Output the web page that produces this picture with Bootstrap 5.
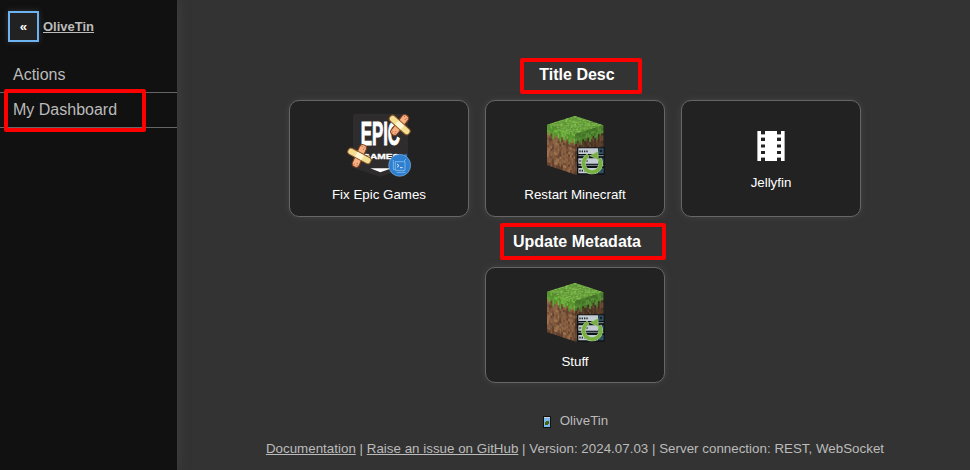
<!DOCTYPE html>
<html lang="en">
<head>
<meta charset="utf-8">
<meta name="viewport" content="width=device-width, initial-scale=1">
<title>OliveTin</title>
<link href="https://cdn.jsdelivr.net/npm/bootstrap@5.3.0/dist/css/bootstrap.min.css" rel="stylesheet">
<style>
body{background:#333;color:#bbb;font-family:"Liberation Sans",Arial,sans-serif;height:470px;overflow:hidden}
.side{width:177px;background:#111;box-shadow:0 0 10px 0 #444;font-size:16px}
.side-head{height:58px;padding:11px 8px 0}
.toggle{width:31px;height:31px;background:#222;border:1px solid #666;outline:2px solid #6db3f2;outline-offset:-2px;color:#fff;font-weight:700;font-size:13.33px;border-radius:0;box-shadow:0 0 6px #333}
.toggle:hover{background:#222;color:#fff}
.brand{font-size:13px;font-weight:700;color:#bbb;margin-left:4px;padding-top:6px}
.side-link{height:35px;padding:0 13px;line-height:34px;color:#bbb;text-decoration:none;border-bottom:1px solid #666}
.content{padding-left:3px}
.heading{font-size:16px;font-weight:700;color:#fff;line-height:20px;margin:65px 0 15px;padding-left:4px}
.heading-next{margin-top:15px}
.tile{width:180px;height:117px;padding:12px 0 0;background:#222;border:1px solid #666;border-radius:10px;box-shadow:0 0 6px #444;color:#fff;font-size:13.333px;line-height:16px}
.tile-short{height:116px}
.tile svg{display:block}
.tile span{padding-top:10px}
.tile-glyph{padding-top:30px}
.tile-glyph span{padding-top:14px}
.tiles{gap:16px}
.foot{font-size:13.333px;letter-spacing:.02px;line-height:16px;color:#bbb;margin-top:30px}
.foot a{color:#bbb}
.foot-links{margin-top:12px}
.marker{position:absolute;border:4px solid #f00;border-radius:2px;pointer-events:none}
.m-nav{left:4px;top:89px;width:142px;height:43px}
.m-title{left:520px;top:58px;width:122px;height:36px}
.m-update{left:500px;top:223px;width:166px;height:37px}
</style>
<script src="https://cdn.jsdelivr.net/npm/bootstrap@5.3.0/dist/js/bootstrap.bundle.min.js"></script>
</head>
<body class="d-flex position-relative">
<svg width="0" height="0" class="position-absolute">
  <symbol id="block" viewBox="9 15 192 192">
    <g id="faces"></g>
    <g>
      <path fill="#0d1318" d="M111 118h83v82h-83z"/>
      <path fill="#c3ccd2" d="M115 121h59v17h-59zM115 151h59v16h-59zM115 180h59v16h-59z"/>
      <path fill="#315064" d="M175 121h16v17h-16zM175 151h16v16h-16zM175 180h16v16h-16z"/>
      <path stroke="#20282e" stroke-width="5" stroke-dasharray="4 3" d="M118 130h28M118 159h28M118 188h28"/>
      <path stroke="#87949b" stroke-width="3" d="M115 143h76M115 172h76"/>
      <circle cx="183" cy="129" r="4" fill="#142028"/>
      <path fill="none" stroke="#c9dcb8" stroke-width="13" d="M145 143a26 26 0 1 0 33 9"/>
      <path fill="none" stroke="#76b043" stroke-width="11" d="M145 143a26 26 0 1 0 33 9"/>
      <path fill="#76b043" stroke="#c9dcb8" stroke-width="1.500" d="M150 143l24-14 1 28-9-6z"/>
    </g>
  </symbol>
  <symbol id="bandage" viewBox="-40 -40 80 80">
    <g transform="rotate(-52)"><rect x="-36" y="-11" width="72" height="22" rx="10" fill="#f5b184" stroke="#7b3d1d" stroke-width="3"/>
    <g fill="#c96f45"><circle cx="-29" cy="-4" r="2"/><circle cx="-23" cy="3" r="2"/><circle cx="-29" cy="5" r="2"/><circle cx="29" cy="-4" r="2"/><circle cx="23" cy="3" r="2"/><circle cx="29" cy="5" r="2"/></g></g>
    <g transform="rotate(42)"><rect x="-38" y="-10" width="76" height="20" rx="9" fill="#f3df94" stroke="#8d5725" stroke-width="3"/><path fill="#fff5d5" d="M-11-8h22V8h-22z"/></g>
  </symbol>
</svg>

<aside class="side d-flex flex-column flex-shrink-0">
  <div class="side-head d-flex align-items-start">
    <button class="toggle btn p-0">«</button>
    <a class="brand" href="#">OliveTin</a>
  </div>
  <nav class="d-flex flex-column">
    <a class="side-link" href="#">Actions</a>
    <a class="side-link" href="#">My Dashboard</a>
  </nav>
</aside>

<main class="content flex-grow-1 d-flex flex-column align-items-center">
  <h2 class="heading">Title Desc</h2>
  <div class="tiles d-flex justify-content-center">
    <button class="tile d-flex flex-column align-items-center">
      <svg width="64" height="64" viewBox="21 24 192 192">
        <path fill="#2e2c2d" d="M48 26h146q10 0 10 10v144q0 8-9 11l-75 24-73-24q-8-3-8-11V36q0-10 9-10z"/>
        <text transform="translate(62 120) scale(.5 1)" font-family="Liberation Sans" font-weight="700" font-size="97" fill="#fff" stroke="#fff" stroke-width="3" textLength="236" lengthAdjust="spacingAndGlyphs">EPIC</text>
        <text x="66" y="162" font-family="Liberation Sans" font-weight="700" font-size="23" fill="#fff" stroke="#fff" textLength="112" lengthAdjust="spacingAndGlyphs">GAMES</text>
        <path fill="#fff" d="M91 190h64l-34 12z"/>
        <use href="#bandage" x="139" y="20" width="80" height="80"/>
        <g transform="rotate(-14 58 156)"><use href="#bandage" x="19" y="113" width="80" height="80"/></g>
        <path fill="#2f7fd0" d="M174 156l26-10 1 20z"/>
        <circle cx="179" cy="181" r="33" fill="#2f7fd0" stroke="#9ccbf2" stroke-width="1.500"/>
        <g fill="none" stroke="#9ccbf2" stroke-width="2"><path d="M166 170h29v26h-29zM160 165v28h6M170 202h26M198 162l-6 6"/><path stroke="#fff" stroke-width="2.500" d="M171 177l6 5-6 5M180 188h8"/></g>
      </svg>
      <span>Fix Epic Games</span>
    </button>
    <button class="tile d-flex flex-column align-items-center">
      <svg width="64" height="64"><use href="#block"/></svg>
      <span>Restart Minecraft</span>
    </button>
    <button class="tile tile-glyph d-flex flex-column align-items-center">
      <svg width="28" height="30" viewBox="0 0 28 30">
        <path fill="#fff" d="M0 0h28v30H0z"/>
        <path fill="#222" d="M4 0h4v3H4zm0 7h4v3H4zm0 6.500h4v3H4zm0 6.500h4v3H4zm0 7h4v3H4zM20 0h4v3h-4zm0 7h4v3h-4zm0 6.500h4v3h-4zm0 6.500h4v3h-4zm0 7h4v3h-4z"/>
        <path fill="#aaa" d="M4 3h4v1H4zM4 6h4v1H4zM4 26h4v1H4zM20 3h4v1h-4zM20 6h4v1h-4zM20 26h4v1h-4zM0 0h1v30H0zM27 0h1v30h-1z"/>
      </svg>
      <span>Jellyfin</span>
    </button>
  </div>
  <h2 class="heading heading-next">Update Metadata</h2>
  <div class="tiles d-flex justify-content-center">
    <button class="tile tile-short d-flex flex-column align-items-center">
      <svg width="64" height="64"><use href="#block"/></svg>
      <span>Stuff</span>
    </button>
  </div>
  <footer class="foot text-center">
    <div class="d-flex justify-content-center align-items-center">
      <svg width="10" height="14" viewBox="0 0 10 14" class="me-1"><path fill="#111" d="M1 2h8v12H1z"/><path fill="#79b9ee" d="M2 4h6v9H2z"/><path fill="#ccc" d="M2 3h6v1H2z"/><path fill="#49620c" d="M4 7h3v3H6v1H3V8h1z"/></svg>
      <span class="ps-1">OliveTin</span>
    </div>
    <div class="foot-links"><a href="#">Documentation</a> | <a href="#">Raise an issue on GitHub</a> | Version: 2024.07.03 | Server connection: REST, WebSocket</div>
  </footer>
</main>

<div class="marker m-nav"></div>
<div class="marker m-title"></div>
<div class="marker m-update"></div>

<script>
// Builds the three textured faces of the grass block from a 16x16 grid each.
let seed = 7;
const rnd = () => (seed = (seed * 16807) % 2147483647) / 2147483647;
const pick = a => a[Math.floor(rnd() * a.length)];
const grass = ['#72b040', '#7cbc4a', '#659f38', '#88c957', '#6eaa3e'];
const dirtL = ['#8a6042', '#755036', '#a07350', '#644330', '#906746', '#805940'];
const dirtR = ['#5d412d', '#4e3625', '#6b4c36', '#443021', '#573c2a'];
const grassL = ['#64a635', '#74b642', '#5a9630'];
const grassR = ['#4f842f', '#447427', '#5a9238'];
const face = (m, colour) => {
  let s = `<g transform="matrix(${m})">`;
  for (let y = 0; y < 16; y++) for (let x = 0; x < 16; x++)
    s += `<path d="M${x} ${y}h1.2v1.2h-1.2z" fill="${colour(x, y)}"/>`;
  return s + '</g>';
};
const edge = [3, 4, 3, 5, 4, 3, 4, 5, 3, 4, 4, 3, 5, 4, 3, 4];
document.getElementById('faces').innerHTML =
  face('5.19 -1.62 5.31 1.75 21 50', () => pick(grass)) +
  face('5.31 1.75 0 7.5 21 50', (x, y) => pick(y < edge[x] ? grassL : dirtL)) +
  face('5.19 -1.62 0 7.6 106 78', (x, y) => pick(y < edge[15 - x] ? grassR : dirtR));
</script>
</body>
</html>
